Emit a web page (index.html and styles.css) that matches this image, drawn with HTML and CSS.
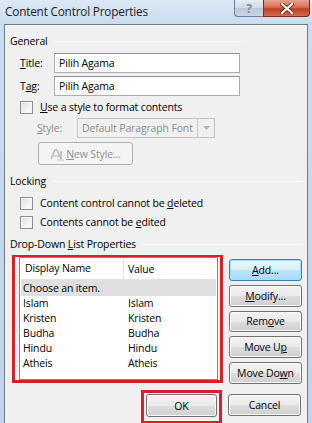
FILE: index.html
```html
<!DOCTYPE html>
<html lang="en">
<head>
  <meta charset="UTF-8">
  <title>Content Control Properties</title>
  <link rel="stylesheet" href="styles.css">
</head>
<body>
  <div class="window">
    <!-- Title bar -->
    <div class="titlebar">
      <span class="title">Content Control Properties</span>
      <div class="caption-buttons">
        <span class="cap-btn help">?</span>
        <span class="cap-btn close">
          <svg width="14" height="11" viewBox="0 0 14 11">
            <path d="M2 1 L12 10 M12 1 L2 10" stroke="#6b2a1c" stroke-width="4" stroke-linecap="square"/>
            <path d="M2 1 L12 10 M12 1 L2 10" stroke="#fff" stroke-width="2.2" stroke-linecap="square"/>
          </svg>
        </span>
      </div>
    </div>

    <div class="client">
      <!-- General -->
      <div class="group-head general-head"><span>General</span><span class="rule"></span></div>
      <div class="field-row title-row">
        <span class="label"><u>T</u>itle:</span>
        <span class="textbox">Pilih Agama</span>
      </div>
      <div class="field-row tag-row">
        <span class="label">T<u>a</u>g:</span>
        <span class="textbox">Pilih Agama</span>
      </div>
      <div class="check-row style-check">
        <span class="checkbox"></span><span><u>U</u>se a style to format contents</span>
      </div>
      <div class="field-row style-row disabled">
        <span class="label style-label"><u>S</u>tyle:</span>
        <span class="combo">
          <span class="combo-text">Default Paragraph Font</span>
          <span class="combo-arrow">
            <svg width="7" height="4" viewBox="0 0 7 4"><path d="M0 0 H7 L3.5 4 Z" fill="#b5b5b5"/></svg>
          </span>
        </span>
      </div>
      <div class="newstyle-row">
        <span class="button newstyle disabled">
          <svg width="14" height="13" viewBox="0 0 14 13">
            <path d="M1 11 L5 2 L7 2 L11 11" stroke="#b9b9b9" stroke-width="1.4" fill="none"/>
            <path d="M3 8 H9" stroke="#b9b9b9" stroke-width="1.2"/>
            <path d="M7 12 H14" stroke="#c7c7c7" stroke-width="1"/>
            <path d="M11 3 V11" stroke="#b0b0b0" stroke-width="1.4"/>
          </svg>
          <span><u>N</u>ew Style...</span>
        </span>
      </div>

      <!-- Locking -->
      <div class="group-head locking-head"><span>Locking</span><span class="rule"></span></div>
      <div class="check-row lock-1">
        <span class="checkbox"></span><span>Content control cannot be <u>d</u>eleted</span>
      </div>
      <div class="check-row lock-2">
        <span class="checkbox"></span><span>Contents cannot be <u>e</u>dited</span>
      </div>

      <!-- Drop-Down List Properties -->
      <div class="group-head list-head"><span>Drop-Down <u>L</u>ist Properties</span><span class="rule"></span></div>
      <div class="list-area">
        <div class="mark list-mark">
          <div class="listview">
            <div class="list-header">
              <span class="col-name">Display Name</span>
              <span class="col-value">Value</span>
            </div>
            <div class="list-item selected"><span class="col-name">Choose an item.</span><span class="col-value"></span></div>
            <div class="list-item"><span class="col-name">Islam</span><span class="col-value">Islam</span></div>
            <div class="list-item"><span class="col-name">Kristen</span><span class="col-value">Kristen</span></div>
            <div class="list-item"><span class="col-name">Budha</span><span class="col-value">Budha</span></div>
            <div class="list-item"><span class="col-name">Hindu</span><span class="col-value">Hindu</span></div>
            <div class="list-item"><span class="col-name">Atheis</span><span class="col-value">Atheis</span></div>
          </div>
        </div>
        <div class="side-buttons">
          <span class="button focused"><u>A</u>dd...</span>
          <span class="button"><u>M</u>odify...</span>
          <span class="button">Rem<u>o</u>ve</span>
          <span class="button">Move U<u>p</u></span>
          <span class="button">Move Do<u>w</u>n</span>
        </div>
      </div>

      <div class="bottom-row">
        <div class="mark ok-mark">
          <span class="button ok">OK</span>
        </div>
        <span class="button cancel">Cancel</span>
      </div>
    </div>
  </div>
</body>
</html>
```

FILE: styles.css
```css
* {
  box-sizing: border-box;
  margin: 0;
  padding: 0;
}

body {
  font-family: 'Open Sans', 'Noto Sans', sans-serif;
  font-size: 10.5px;
  letter-spacing: -0.15px;
  color: #000;
  background-color: #c6daef;
  width: 312px;
  height: 423px;
  overflow: hidden;
  white-space: nowrap;
}

u {
  text-decoration: underline;
  text-underline-offset: 1px;
}

.window {
  height: 423px;
  background: linear-gradient(to bottom, #dce8f5 0, #cadcf0 24px, #bfd4ec 100%);
}

/* Title bar */
.titlebar {
  height: 24px;
  display: flex;
  justify-content: space-between;
  align-items: flex-start;
}

.title {
  font-size: 11.8px;
  letter-spacing: -0.2px;
  padding: 3px 0 0 5px;
  color: #1e1e1e;
}

.caption-buttons {
  display: flex;
  margin-right: 2px;
}

.cap-btn {
  height: 17px;
  display: flex;
  align-items: center;
  justify-content: center;
  border: 1px solid #6d7f96;
  border-top: none;
}

.help {
  width: 29px;
  border-radius: 0 0 0 4px;
  border-right: none;
  background: linear-gradient(to bottom, #e7edf4 0, #cfd9e6 50%, #b9c7d8 51%, #c9d5e3 100%);
  color: #7f8ea3;
  font-weight: bold;
  font-size: 12px;
}

.close {
  width: 47px;
  border-radius: 0 0 4px 0;
  border-color: #7c2c1f;
  background: linear-gradient(to bottom, #e8a08f 0, #d7715b 45%, #c13f24 55%, #d36a4d 100%);
}

/* Client area */
.client {
  height: 399px;
  margin: 0 4px 0 4px;
  background-color: #f0f0f0;
  border: 1px solid #6f7c8b;
  border-bottom: none;
  padding: 0 4px 0 5px;
}

.group-head {
  height: 14px;
  line-height: 14px;
  display: flex;
  align-items: center;
  gap: 6px;
}

.group-head .rule {
  flex: 1;
  height: 1px;
  background-color: #d5dfe5;
  border-bottom: 1px solid #fff;
}

.general-head {
  margin-top: 9px;
  width: 235px;
}

.locking-head {
  margin-top: 9px;
}

.list-head {
  margin-top: 8px;
}

.field-row {
  display: flex;
  align-items: center;
  height: 20px;
  padding-left: 10px;
}

.title-row {
  margin-top: 5px;
}

.tag-row {
  margin-top: 3px;
}

.label {
  width: 34px;
}

.textbox {
  width: 186px;
  height: 20px;
  line-height: 18px;
  padding-left: 4px;
  background-color: #fff;
  border: 1px solid #abadb3;
  border-top-color: #8f949c;
}

.check-row {
  display: flex;
  align-items: center;
  gap: 7px;
  height: 14px;
  padding-left: 10px;
}

.style-check {
  margin-top: 4px;
}

.lock-1 {
  margin-top: 8px;
}

.lock-2 {
  margin-top: 5px;
}

.checkbox {
  width: 13px;
  height: 13px;
  border: 1px solid #8e8f8f;
  background: linear-gradient(135deg, #dcdcdc 0, #f4f4f4 60%, #fff 100%);
  box-shadow: inset 0 0 0 1px #f4f4f4;
}

.style-row {
  margin-top: 4px;
  padding-left: 27px;
}

.disabled {
  color: #8d8d8d;
}

.style-label {
  width: 40px;
}

.combo {
  display: flex;
  width: 138px;
  height: 20px;
  border: 1px solid #c3c3c3;
  background-color: #f0f0f0;
}

.combo-text {
  flex: 1;
  line-height: 18px;
  padding-left: 4px;
}

.combo-arrow {
  width: 17px;
  display: flex;
  align-items: center;
  justify-content: center;
  border-left: 1px solid #c9c9c9;
}

.newstyle-row {
  margin-top: 4px;
  padding-left: 28px;
}

/* Buttons */
.button {
  display: flex;
  align-items: center;
  justify-content: center;
  height: 22px;
  border: 1px solid #707070;
  border-radius: 3px;
  background: linear-gradient(to bottom, #f2f2f2 0, #ebebeb 50%, #dddddd 51%, #cfcfcf 100%);
  box-shadow: inset 0 0 0 1px #fcfcfc;
}

.button.disabled {
  border-color: #adb2b5;
  background: #f4f4f4;
  box-shadow: none;
}

.newstyle {
  width: 95px;
  height: 23px;
  gap: 2px;
}

.newstyle svg {
  margin-top: 1px;
}

/* List area */
.list-area {
  display: flex;
  margin-top: 4px;
  height: 129px;
}

.mark {
  border: 3px solid #d3222c;
}

.list-mark {
  width: 211px;
  height: 128px;
  margin-left: 2px;
  padding: 0 2px 0 4px;
  border-top-width: 2px;
}

.listview {
  height: 123px;
  background-color: #fff;
  border: 1px solid #828790;
  padding: 0 1px;
}

.list-header {
  display: flex;
  height: 22px;
  align-items: center;
  border-bottom: 1px solid #e5e5e5;
}

.list-header .col-name {
  padding-left: 4px;
  border-right: 1px solid #e5e5e5;
  line-height: 21px;
}

.list-header .col-value {
  padding-left: 4px;
}

.col-name {
  width: 103px;
}

.list-item {
  display: flex;
  height: 15px;
  line-height: 15px;
  padding-left: 2px;
}

.list-item .col-value {
  padding-left: 2px;
}

.list-item.selected {
  background-color: #dfdfdf;
  height: 16px;
  line-height: 16px;
}

.side-buttons {
  display: flex;
  flex-direction: column;
  gap: 4px;
  margin-left: 6px;
  padding-top: 4px;
}

.side-buttons .button {
  width: 73px;
}

.button.focused {
  border-color: #3c7fb1;
  box-shadow: inset 0 0 0 1px #a8dcf6;
  background: linear-gradient(to bottom, #eaf6fd 0, #d9f0fc 50%, #bee6fd 51%, #a7d9f5 100%);
}

.bottom-row {
  display: flex;
  justify-content: flex-end;
  align-items: flex-start;
  margin-top: 6px;
  padding-right: 2px;
}

.ok-mark {
  width: 81px;
  height: 34px;
  padding: 1px 2px 0 2px;
}

.ok {
  width: 71px;
  height: 23px;
}

.cancel {
  width: 73px;
  margin-left: 6px;
  margin-top: 4px;
}
```
